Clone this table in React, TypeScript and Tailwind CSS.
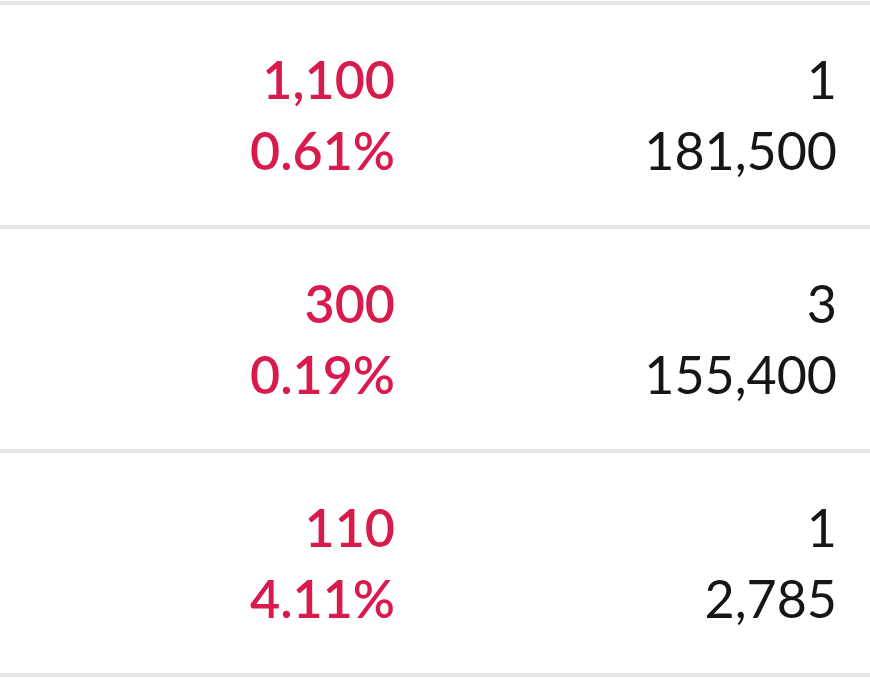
const rows = [
  { diff: "1,100", pct: "0.61%", qty: "1", total: "181,500" },
  { diff: "300", pct: "0.19%", qty: "3", total: "155,400" },
  { diff: "110", pct: "4.11%", qty: "1", total: "2,785" },
];

export default function App() {
  return (
    <div
      className="w-[870px] h-[681px] bg-white border-t-4 border-[#e6e6e6] mt-px"
      style={{ fontFamily: "Lato, 'Liberation Sans', sans-serif" }}
    >
      {rows.map((r) => (
        <div
          key={r.total}
          className="grid grid-cols-[395px_1fr] pr-[33px] h-[224px] items-center border-b-4 border-[#e6e6e6] text-[52px] leading-[71px]"
        >
          <div className="text-right text-[#d81a4d] font-semibold">
            <div>{r.diff}</div>
            <div>{r.pct}</div>
          </div>
          <div className="text-right text-[#161616]">
            <div>{r.qty}</div>
            <div>{r.total}</div>
          </div>
        </div>
      ))}
    </div>
  );
}
